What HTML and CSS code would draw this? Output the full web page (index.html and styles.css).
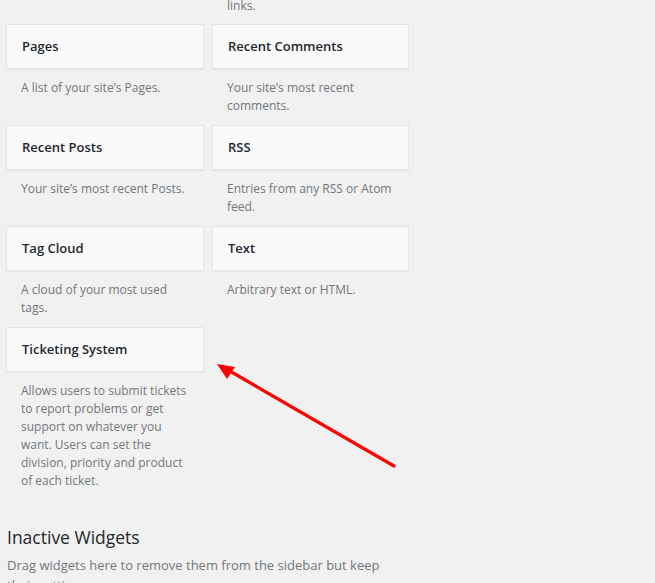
FILE: index.html
```html
<!DOCTYPE html>
<html>
<head>
<meta charset="utf-8">
<link rel="stylesheet" href="styles.css">
</head>
<body>
<div class="page">
  <div class="widget-list">
    <div class="widget"></div>
    <div class="widget"><p class="widget-desc">links.</p></div>

    <div class="widget">
      <div class="widget-top"><h3 class="widget-title">Pages</h3></div>
      <p class="widget-desc">A list of your site’s Pages.</p>
    </div>
    <div class="widget">
      <div class="widget-top"><h3 class="widget-title">Recent Comments</h3></div>
      <p class="widget-desc">Your site’s most recent comments.</p>
    </div>

    <div class="widget">
      <div class="widget-top"><h3 class="widget-title">Recent Posts</h3></div>
      <p class="widget-desc">Your site’s most recent Posts.</p>
    </div>
    <div class="widget">
      <div class="widget-top"><h3 class="widget-title">RSS</h3></div>
      <p class="widget-desc">Entries from any RSS or Atom feed.</p>
    </div>

    <div class="widget">
      <div class="widget-top"><h3 class="widget-title">Tag Cloud</h3></div>
      <p class="widget-desc">A cloud of your most used tags.</p>
    </div>
    <div class="widget">
      <div class="widget-top"><h3 class="widget-title">Text</h3></div>
      <p class="widget-desc">Arbitrary text or HTML.</p>
    </div>

    <div class="widget">
      <div class="widget-top"><h3 class="widget-title">Ticketing System</h3></div>
      <p class="widget-desc">Allows users to submit tickets to report problems or get support on whatever you want. Users can set the division, priority and product of each ticket.</p>
    </div>
  </div>

  <div class="inactive">
    <h2 class="inactive-title">Inactive Widgets</h2>
    <p class="inactive-desc">Drag widgets here to remove them from the sidebar but keep their settings.</p>
  </div>

  <svg class="arrow" width="655" height="583" viewBox="0 0 655 583">
    <line x1="394" y1="470" x2="228" y2="374" stroke="#ff0000" stroke-width="3.2" stroke-linecap="round"/>
    <polygon points="217,368 235,371 227,383" fill="#ff0000"/>
  </svg>
</div>
</body>
</html>
```
FILE: styles.css
```css
html, body {
  margin: 0;
  padding: 0;
  background: #f1f1f1;
}
body {
  font-family: "Open Sans", "Liberation Sans", sans-serif;
  font-size: 13px;
  color: #444;
  overflow: hidden;
  height: 583px;
}
.page {
  position: relative;
  height: 583px;
  padding-left: 6px;
}
.widget-list {
  display: grid;
  grid-template-columns: 198px 197px;
  column-gap: 8px;
  margin-top: -4px;
}
.widget-top {
  background: #fafafa;
  border: 1px solid #e5e5e5;
  box-shadow: 0 1px 1px rgba(0, 0, 0, 0.04);
}
.widget-title {
  margin: 0;
  padding: 15px;
  font-size: 13px;
  line-height: 13px;
  font-weight: 600;
  color: #23282d;
  white-space: nowrap;
}
.widget-desc {
  margin: 0;
  padding: 10px 15px 10px;
  font-size: 12px;
  line-height: 18px;
  color: #72777c;
}
.widget:first-child .widget-desc,
.widget:nth-child(2) .widget-desc {
  padding-top: 1px;
  padding-bottom: 9px;
}
.inactive {
  padding: 25px 1px 0;
}
.inactive-title {
  margin: 0;
  font-size: 17.5px;
  line-height: 24px;
  font-weight: 400;
  color: #23282d;
}
.inactive-desc {
  margin: 6px 0 0;
  width: 400px;
  line-height: 20px;
  color: #72777c;
}
.arrow {
  position: absolute;
  left: 0;
  top: 0;
  pointer-events: none;
}
```
